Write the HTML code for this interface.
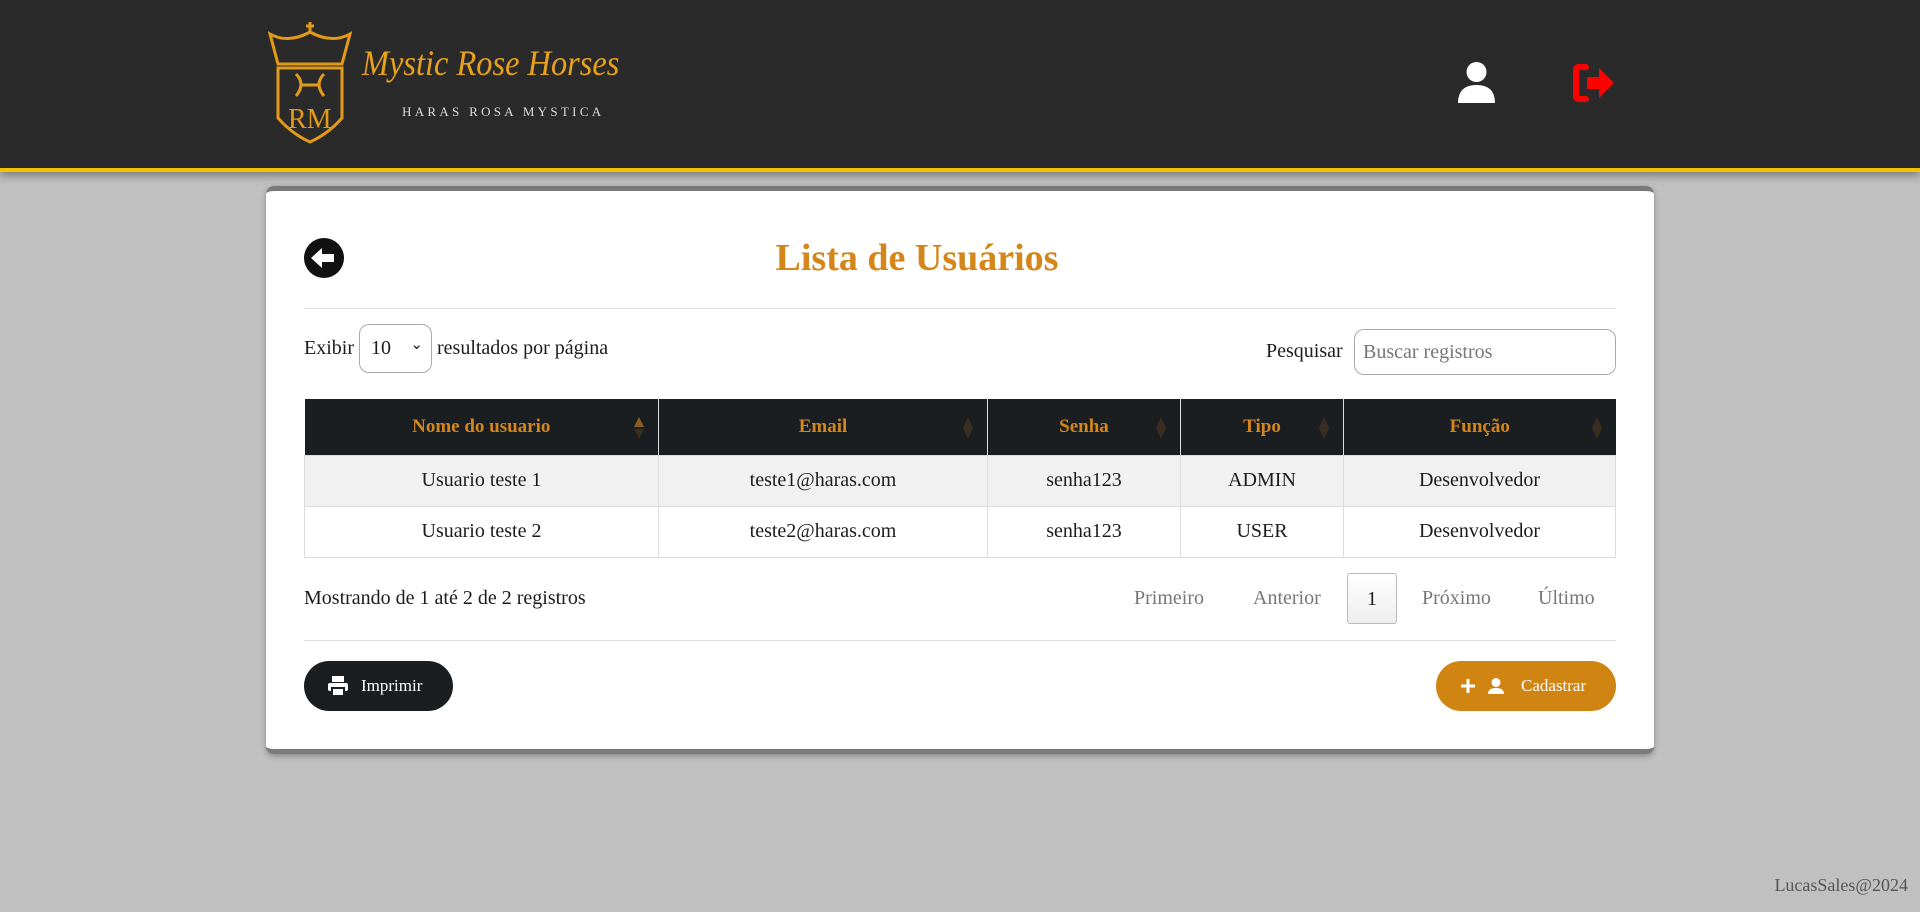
<!DOCTYPE html>
<html><head><meta charset="utf-8"><style>
*{box-sizing:border-box;margin:0;padding:0}
body{width:1920px;height:912px;background:#c0c0c0;font-family:"Liberation Serif",serif;color:#1c1c1c;position:relative;overflow:hidden}
.hdr{position:absolute;left:0;top:0;width:1920px;height:172px;background:#2a2a2a;border-bottom:4px solid #f2c200;box-shadow:0 4px 8px rgba(0,0,0,.35)}
.card{position:absolute;left:266px;top:186px;width:1388px;height:568px;background:#fff;border-radius:8px;border-top:5px solid #7a7a7a;border-bottom:5px solid #7a7a7a;box-shadow:0 2px 6px rgba(0,0,0,.3)}
.a{position:absolute}
.t{font-size:20px;white-space:nowrap}
table{position:absolute;left:304px;top:399px;width:1312px;border-collapse:collapse;font-size:20px}
th{background:#1b1e21;color:#d4861a;height:56px;font-weight:bold;border-right:1px solid #ddd;position:relative;font-size:19px}
th:last-child{border-right:none}
th .s{position:absolute;right:14px;top:18px;width:10px;height:22px}
td{height:51px;text-align:center;border:1px solid #dcdcdc}
tr.g td{background:#f1f1f1}
.btn{position:absolute;height:50px;border-radius:25px;color:#fff;font-size:17px;display:flex;align-items:center}
</style></head><body>
<div class="hdr">
<svg class="a" style="left:268px;top:22px" width="84" height="122" viewBox="0 0 84 122" fill="none" stroke="#e39a16" stroke-width="3">
<path d="M2 12 Q20 22 42 10 Q64 22 82 12 L74 42 L10 42 Z"/><path d="M42 0V10M38 4H46"/>
<path d="M10 46H74V96Q60 112 42 120Q24 112 10 96Z"/>
<path d="M28 52Q38 62 28 74M56 52Q46 62 56 74M32 63H52"/>
<text x="20" y="106" font-family="Liberation Serif" font-size="28" fill="#e39a16" stroke="none">RM</text>
</svg>
<div class="a" style="left:362px;top:42px;font-family:'Liberation Serif',serif;font-style:italic;font-size:36px;color:#e8a11d;transform:scaleX(.9);transform-origin:left">Mystic Rose Horses</div>
<div class="a" style="left:402px;top:104px;font-size:13px;letter-spacing:3.3px;color:#ddd">HARAS ROSA MYSTICA</div>
<svg class="a" style="left:1457px;top:61px" width="39" height="42" viewBox="0 0 39 42"><circle cx="19.5" cy="11" r="10" fill="#fff"/><path d="M1 42Q1 24 19.5 24Q38 24 38 42Z" fill="#fff"/></svg>
<svg class="a" style="left:1573px;top:64px" width="43" height="38" viewBox="0 0 43 38"><path d="M13 3H6Q3 3 3 6V32Q3 35 6 35H13" stroke="#f00" stroke-width="6" fill="none" stroke-linecap="round"/><path d="M14 13H26V4L41 19L26 34V25H14Z" fill="#f00"/></svg>
</div>
<div class="card"></div>
<svg class="a" style="left:304px;top:238px" width="40" height="40" viewBox="0 0 40 40"><circle cx="20" cy="20" r="20" fill="#111"/><path d="M7 20L18 10V16H30V24H18V30Z" fill="#fff"/></svg>
<div class="a" style="left:0;width:1920px;top:236px;text-align:center;font-size:38px;font-weight:bold;color:#d4861a"><span style="position:relative;left:-43px">Lista de Usuários</span></div>
<div class="a" style="left:304px;top:308px;width:1312px;height:1px;background:#dedede"></div>
<div class="a t" style="left:304px;top:337px">Exibir</div>
<div class="a t" style="left:359px;top:324px;width:73px;height:49px;border:1px solid #aaa;border-radius:10px;padding:12px 0 0 11px">10<span style="position:absolute;right:8px;top:10px;font-size:15px">&#8964;</span></div>
<div class="a t" style="left:437px;top:337px">resultados por página</div>
<div class="a t" style="left:1266px;top:340px">Pesquisar</div>
<div class="a t" style="left:1354px;top:329px;width:262px;height:46px;border:1px solid #aaa;border-radius:10px;padding:11px 0 0 8px;color:#777">Buscar registros</div>
<table>
<tr><th style="width:354px">Nome do usuario<svg class="s" viewBox="0 0 10 22"><path d="M5 0L10 10H0Z" fill="#8a5c1e"/><path d="M5 22L10 12H0Z" fill="#3a2e20"/></svg></th><th style="width:329px">Email<svg class="s" viewBox="0 0 10 22"><path d="M5 0L10 11L5 22L0 11Z" fill="#3a2e20"/></svg></th><th style="width:193px">Senha<svg class="s" viewBox="0 0 10 22"><path d="M5 0L10 11L5 22L0 11Z" fill="#3a2e20"/></svg></th><th style="width:163px">Tipo<svg class="s" viewBox="0 0 10 22"><path d="M5 0L10 11L5 22L0 11Z" fill="#3a2e20"/></svg></th><th>Função<svg class="s" viewBox="0 0 10 22"><path d="M5 0L10 11L5 22L0 11Z" fill="#3a2e20"/></svg></th></tr>
<tr class="g"><td>Usuario teste 1</td><td>teste1@haras.com</td><td>senha123</td><td>ADMIN</td><td>Desenvolvedor</td></tr>
<tr><td>Usuario teste 2</td><td>teste2@haras.com</td><td>senha123</td><td>USER</td><td>Desenvolvedor</td></tr>
</table>
<div class="a t" style="left:304px;top:587px">Mostrando de 1 até 2 de 2 registros</div>
<div class="a t" style="left:1134px;top:587px;color:#777">Primeiro</div>
<div class="a t" style="left:1253px;top:587px;color:#777">Anterior</div>
<div class="a t" style="left:1347px;top:573px;width:50px;height:51px;border:1px solid #bbb;border-radius:3px;background:linear-gradient(#fff,#eee);text-align:center;padding-top:14px">1</div>
<div class="a t" style="left:1422px;top:587px;color:#777">Próximo</div>
<div class="a t" style="left:1538px;top:587px;color:#777">Último</div>
<div class="a" style="left:304px;top:640px;width:1312px;height:1px;background:#dedede"></div>
<div class="btn" style="left:304px;top:661px;width:149px;background:#1b1e21;padding-left:24px">
<svg width="20" height="20" viewBox="0 0 20 20"><rect x="4" y="0" width="12" height="6" fill="#fff"/><rect x="0" y="7" width="20" height="8" rx="2" fill="#fff"/><rect x="4" y="12" width="12" height="8" fill="#fff" stroke="#1b1e21" stroke-width="2"/></svg>
<span style="margin-left:13px">Imprimir</span></div>
<div class="btn" style="left:1436px;top:661px;width:180px;background:#d08412;padding-left:24px">
<svg width="16" height="16" viewBox="0 0 16 16"><path d="M8 1V15M1 8H15" stroke="#fff" stroke-width="3"/></svg>
<svg style="margin-left:12px" width="16" height="16" viewBox="0 0 16 16"><circle cx="8" cy="4.5" r="4.5" fill="#fff"/><path d="M0 16Q0 10 8 10Q16 10 16 16Z" fill="#fff"/></svg>
<span style="margin-left:17px">Cadastrar</span></div>
<div class="a" style="right:12px;top:875px;font-size:18px;color:#555">LucasSales@2024</div>
</body></html>
